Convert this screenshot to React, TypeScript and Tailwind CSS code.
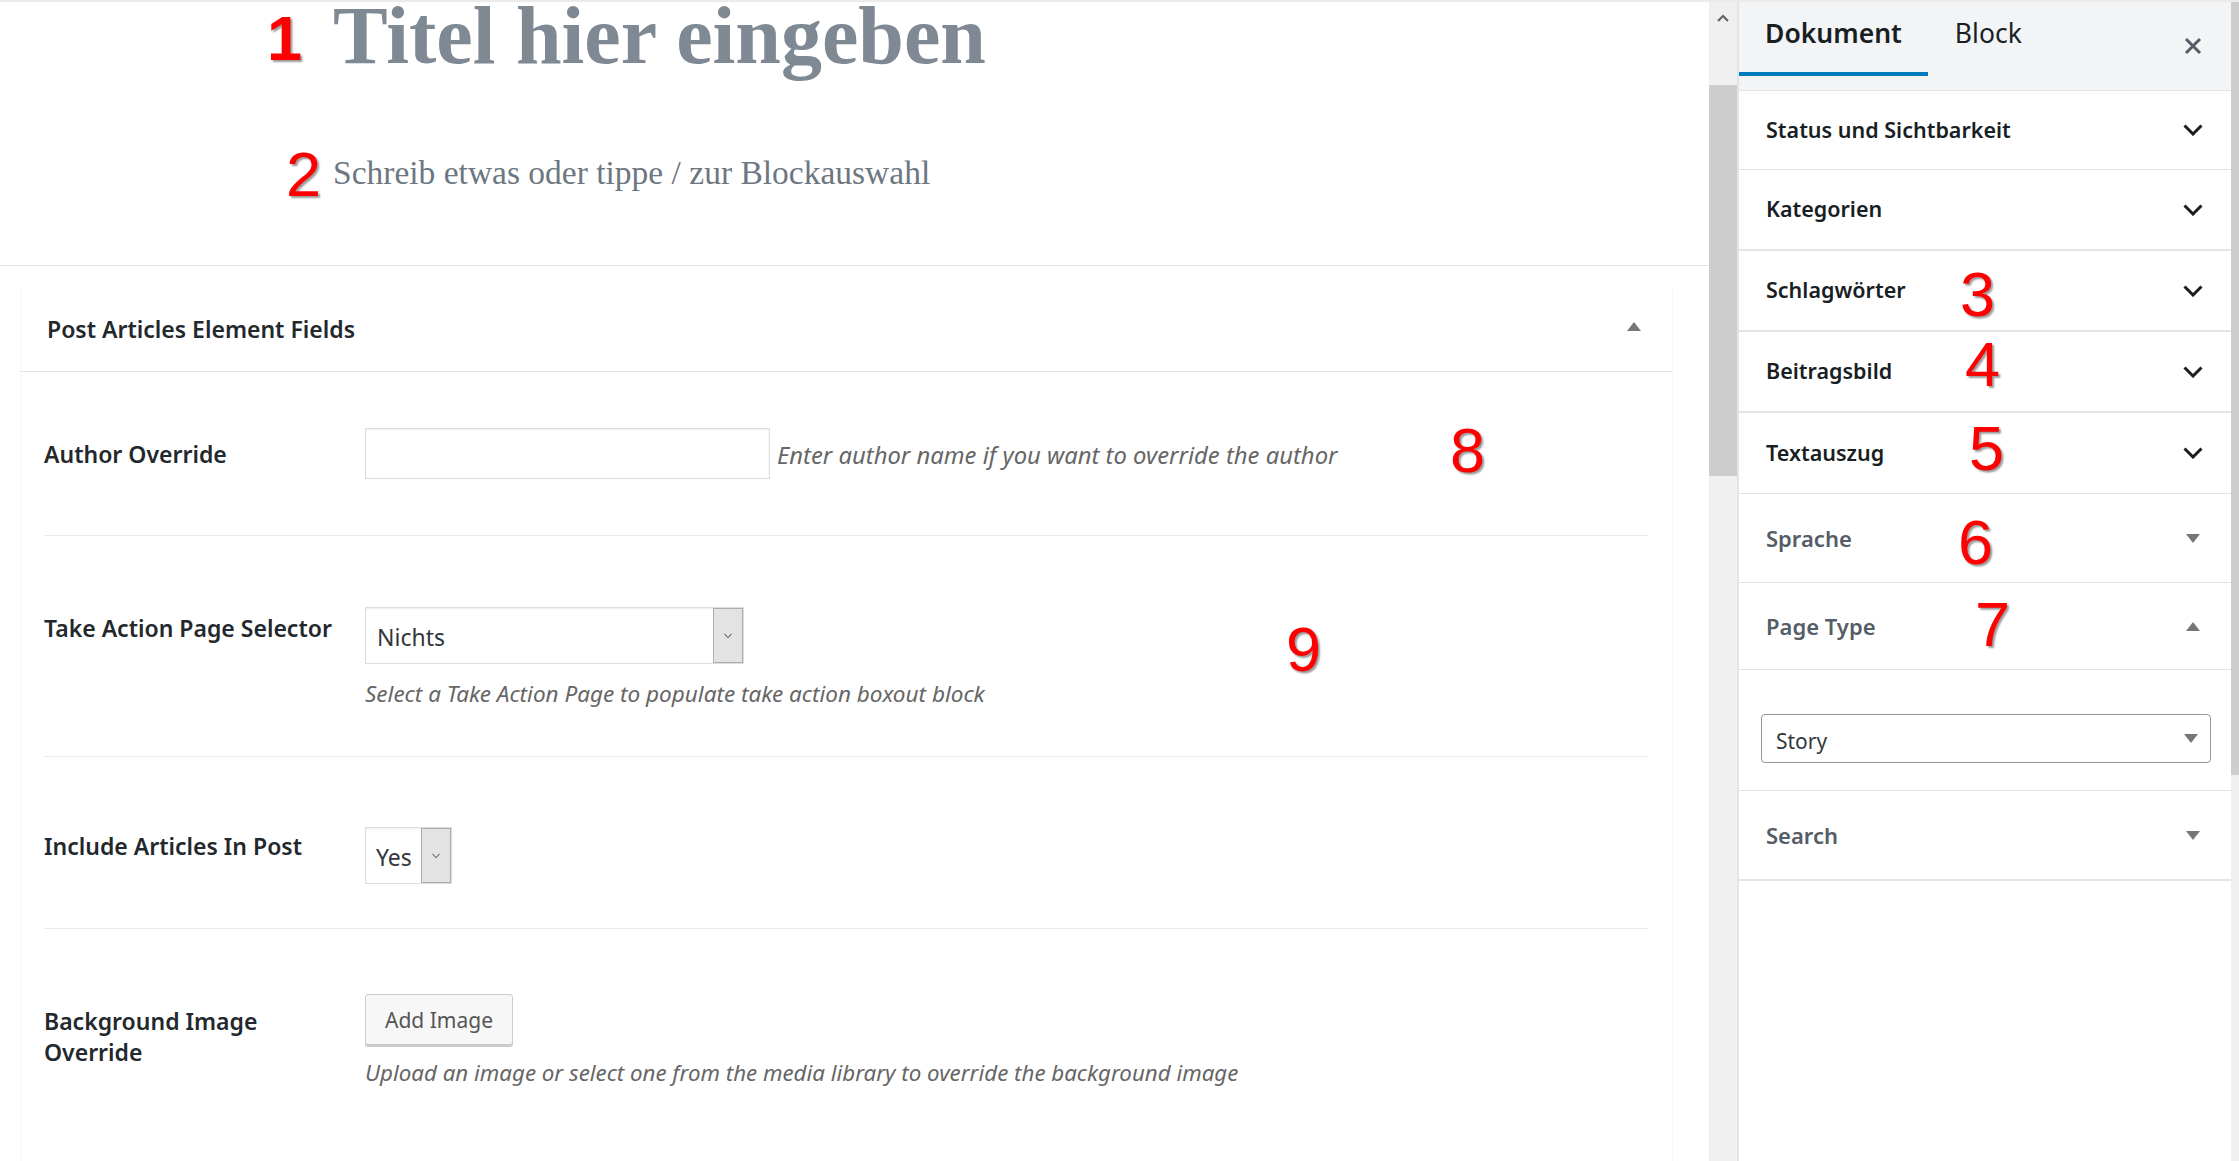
import React from "react";

function Chevron() {
  return (
    <svg width="20" height="12" viewBox="0 0 20 12" fill="none">
      <path d="M1.5 1.5 L10 10 L18.5 1.5" stroke="#191e23" strokeWidth="3" />
    </svg>
  );
}

function TriDown() {
  return (
    <svg width="14" height="9" viewBox="0 0 14 9">
      <polygon points="0,0 14,0 7,9" fill="#72777c" />
    </svg>
  );
}

function TriUp() {
  return (
    <svg width="14" height="9" viewBox="0 0 14 9">
      <polygon points="0,9 14,9 7,0" fill="#72777c" />
    </svg>
  );
}

function SmallV() {
  return (
    <svg width="8" height="6" viewBox="0 0 8 6" fill="none">
      <path d="M0.5 0.8 L4 4.8 L7.5 0.8" stroke="#444444" strokeWidth="1" />
    </svg>
  );
}

export default function App() {
  const digit =
    "absolute font-['Liberation_Sans',Arial,sans-serif] text-[63px] leading-[63px] text-[#ff0000] [text-shadow:2px_2px_2px_rgba(0,0,0,0.4)] pointer-events-none";
  return (
    <div className="relative flex h-[1161px] w-[2239px] overflow-hidden border-t-2 border-[#ebebeb] bg-white font-['Noto_Sans','Open_Sans',sans-serif]">
      {/* Main editor */}
      <div className="flex w-[1709px] shrink-0 flex-col">
        <div className="h-[264px] shrink-0 border-b border-[#e2e4e7] pl-[333px]">
          <h1 className="whitespace-nowrap pt-[2px] font-['Liberation_Serif',serif] text-[82px] font-bold leading-[64px] text-[#7e8993]">
            Titel hier eingeben
          </h1>
          <p className="mt-[85px] whitespace-nowrap font-['Liberation_Serif',serif] text-[33.5px] leading-[40px] text-[#6c7781]">
            Schreib etwas oder tippe / zur Blockauswahl
          </p>
        </div>

        <div className="ml-[20px] mt-[21px] w-[1653px] flex-1 border-x border-[#f6f6f6]">
          <div className="flex h-[85px] items-center justify-between border-b border-[#e2e4e7] pl-[26px] pr-[31px]">
            <span className="text-[23px] font-semibold leading-[30px] text-[#23282d]">
              Post Articles Element Fields
            </span>
            <span className="mb-[6px]">
              <TriUp />
            </span>
          </div>

          <div className="pl-[23px] pr-[24px]">
            {/* Row 1 */}
            <div className="flex h-[164px] items-center border-b border-[#e9e9e9]">
              <div className="w-[321px] shrink-0 text-[23px] font-semibold leading-[30px] text-[#23282d]">
                Author Override
              </div>
              <div className="h-[51px] w-[405px] border border-[#dddddd] bg-white shadow-[inset_0_1px_2px_rgba(0,0,0,0.07)]" />
              <span className="ml-[7px] mt-[2px] text-[23.8px] italic leading-[30px] text-[#666666]">
                Enter author name if you want to override the author
              </span>
            </div>

            {/* Row 2 */}
            <div className="flex h-[221px] items-start border-b border-[#e9e9e9] pt-[71px]">
              <div className="mt-[6px] w-[321px] shrink-0 text-[23px] font-semibold leading-[30px] text-[#23282d]">
                Take Action Page Selector
              </div>
              <div className="flex flex-col">
                <div className="flex h-[57px] w-[379px] items-stretch border border-[#dddddd] bg-white shadow-[inset_0_1px_2px_rgba(0,0,0,0.07)]">
                  <span className="flex flex-1 items-center pl-[11px] pt-[3px] text-[23px] leading-[30px] text-[#32373c]">
                    Nichts
                  </span>
                  <span className="flex w-[30px] items-center justify-center border border-[#adadad] bg-[#e3e3e3]">
                    <SmallV />
                  </span>
                </div>
                <span className="mt-[15px] text-[22.5px] italic leading-[30px] text-[#666666]">
                  Select a Take Action Page to populate take action boxout block
                </span>
              </div>
            </div>

            {/* Row 3 */}
            <div className="flex h-[172px] items-start border-b border-[#e9e9e9] pt-[70px]">
              <div className="mt-[4px] w-[321px] shrink-0 text-[23px] font-semibold leading-[30px] text-[#23282d]">
                Include Articles In Post
              </div>
              <div className="flex h-[57px] w-[87px] items-stretch border border-[#dddddd] bg-white shadow-[inset_0_1px_2px_rgba(0,0,0,0.07)]">
                <span className="flex flex-1 items-center pl-[10px] pt-[3px] text-[23px] leading-[30px] text-[#32373c]">
                  Yes
                </span>
                <span className="flex w-[30px] items-center justify-center border border-[#adadad] bg-[#e3e3e3]">
                  <SmallV />
                </span>
              </div>
            </div>

            {/* Row 4 */}
            <div className="flex items-start pt-[65px]">
              <div className="mt-[12px] w-[321px] shrink-0">
                <div className="max-w-[296px] text-[23px] font-semibold leading-[31px] text-[#23282d]">
                  Background Image Override
                </div>
              </div>
              <div className="flex flex-col items-start">
                <button className="h-[51px] w-[148px] rounded-[3px] border border-[#cccccc] bg-[#f7f7f7] text-[21px] leading-[30px] text-[#555555] shadow-[0_2px_0_#cccccc]">
                  Add Image
                </button>
                <span className="mt-[13px] text-[22.3px] italic leading-[30px] text-[#666666]">
                  Upload an image or select one from the media library to override the background image
                </span>
              </div>
            </div>
          </div>
        </div>
      </div>

      {/* Editor scrollbar */}
      <div className="flex w-[28px] shrink-0 flex-col bg-[#f0f0f0]">
        <div className="flex h-[83px] items-start justify-center pt-[12px]">
          <svg width="12" height="8" viewBox="0 0 12 8" fill="none">
            <path d="M1 7 L6 2 L11 7" stroke="#606060" strokeWidth="2" />
          </svg>
        </div>
        <div className="h-[391px] bg-[#cdcdcd]" />
      </div>

      {/* Sidebar */}
      <div className="flex w-[494px] shrink-0 flex-col border-l-2 border-[#e2e4e7] bg-white">
        <div className="flex h-[89px] shrink-0 border-b border-[#e2e4e7] bg-[#f3f4f5]">
          <div className="h-[74px] border-b-4 border-[#007cba] px-[26px] pt-[13px] text-[26.5px] font-semibold leading-[36px] text-[#191e23]">
            Dokument
          </div>
          <div className="h-[74px] px-[27px] pt-[13px] text-[26.5px] leading-[36px] text-[#191e23]">
            Block
          </div>
          <div className="ml-auto mr-[29px] mt-[35px]">
            <svg width="18" height="18" viewBox="0 0 18 18" fill="none">
              <path d="M2 2 L16 16 M16 2 L2 16" stroke="#555d66" strokeWidth="3" />
            </svg>
          </div>
        </div>

        <div className="flex h-[79px] shrink-0 items-center justify-between border-b border-[#e2e4e7] pl-[27px] pr-[28px]">
          <span className="text-[21.5px] font-semibold text-[#191e23]">Status und Sichtbarkeit</span>
          <Chevron />
        </div>
        <div className="flex h-[81px] shrink-0 items-center justify-between border-b-2 border-[#e2e4e7] pl-[27px] pr-[28px]">
          <span className="text-[21.5px] font-semibold text-[#191e23]">Kategorien</span>
          <Chevron />
        </div>
        <div className="flex h-[81px] shrink-0 items-center justify-between border-b-2 border-[#e2e4e7] pl-[27px] pr-[28px]">
          <span className="text-[21.5px] font-semibold text-[#191e23]">Schlagwörter</span>
          <Chevron />
        </div>
        <div className="flex h-[81px] shrink-0 items-center justify-between border-b-2 border-[#e2e4e7] pl-[27px] pr-[28px]">
          <span className="text-[21.5px] font-semibold text-[#191e23]">Beitragsbild</span>
          <Chevron />
        </div>
        <div className="flex h-[81px] shrink-0 items-center justify-between border-b border-[#e2e4e7] pl-[27px] pr-[28px]">
          <span className="text-[21.5px] font-semibold text-[#191e23]">Textauszug</span>
          <Chevron />
        </div>
        <div className="flex h-[89px] shrink-0 items-center justify-between border-b border-[#e2e4e7] pl-[27px] pr-[31px]">
          <span className="text-[22px] font-semibold text-[#555d66]">Sprache</span>
          <TriDown />
        </div>
        <div className="flex h-[87px] shrink-0 items-center justify-between border-b border-[#e2e4e7] pl-[27px] pr-[31px]">
          <span className="text-[22px] font-semibold text-[#555d66]">Page Type</span>
          <TriUp />
        </div>
        <div className="h-[121px] shrink-0 border-b border-[#e2e4e7] pl-[22px] pr-[20px] pt-[44px]">
          <div className="flex h-[49px] items-center justify-between rounded-[4px] border border-[#8f98a1] bg-white pl-[14px] pr-[12px]">
            <span className="mt-[6px] text-[21px] text-[#32373c]">Story</span>
            <TriDown />
          </div>
        </div>
        <div className="flex h-[90px] shrink-0 items-center justify-between border-b-2 border-[#e2e4e7] pl-[27px] pr-[31px]">
          <span className="text-[22px] font-semibold text-[#555d66]">Search</span>
          <TriDown />
        </div>
      </div>

      {/* Window scrollbar strip */}
      <div className="flex w-[8px] shrink-0 flex-col bg-[#f0f0f0]">
        <div className="h-[773px] bg-[#cdcdcd]" />
      </div>

      {/* Annotation numbers */}
      <span className={digit + " left-[267px] top-[5px] font-bold"}>1</span>
      <span className={digit + " left-[286px] top-[141px]"}>2</span>
      <span className={digit + " left-[1960px] top-[261px]"}>3</span>
      <span className={digit + " left-[1965px] top-[331px]"}>4</span>
      <span className={digit + " left-[1969px] top-[415px]"}>5</span>
      <span className={digit + " left-[1958px] top-[509px]"}>6</span>
      <span className={digit + " left-[1975px] top-[591px]"}>7</span>
      <span className={digit + " left-[1450px] top-[417px]"}>8</span>
      <span className={digit + " left-[1286px] top-[616px]"}>9</span>
    </div>
  );
}
